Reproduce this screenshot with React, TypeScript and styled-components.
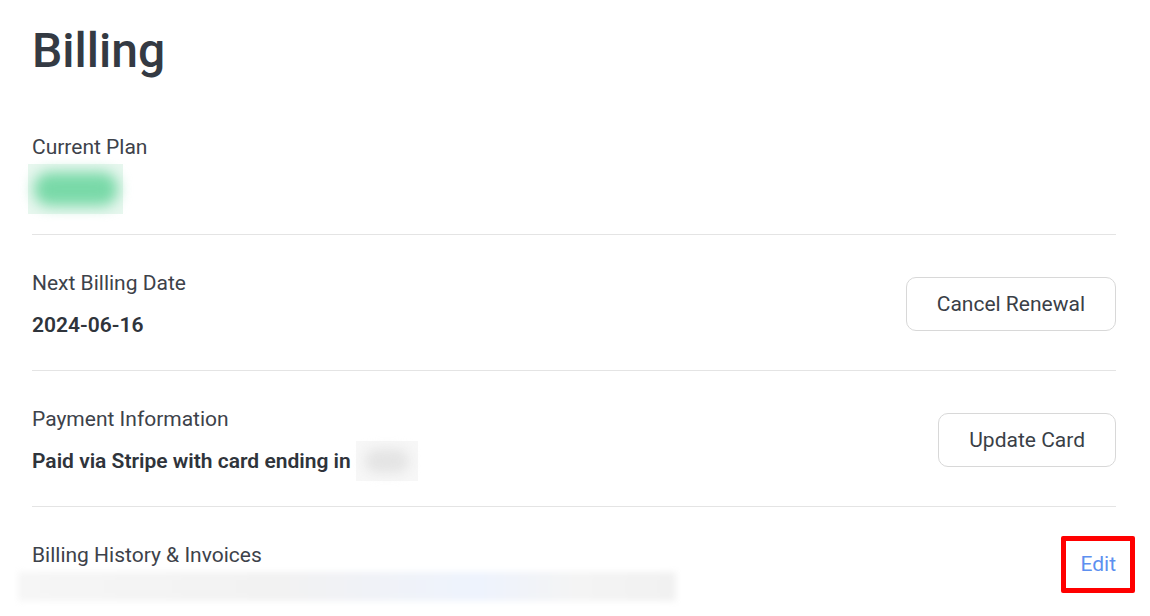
import React from "react";
import styled, { createGlobalStyle } from "styled-components";

const Global = createGlobalStyle`
  html, body { margin: 0; padding: 0; background: #ffffff; }
  body { font-family: Roboto, "Noto Sans", Arial, sans-serif; color: #3a3f47; }
  * { box-sizing: border-box; }
`;

const Page = styled.div`
  padding: 18px 34px 0 32px;
  width: 1150px;
  height: 616px;
  overflow: hidden;
`;

const Title = styled.h1`
  margin: 0 0 15px 0;
  font-size: 48px;
  line-height: 66px;
  font-weight: 500;
  color: #343a43;
`;

const Section = styled.div<{ $last?: boolean }>`
  display: flex;
  align-items: center;
  justify-content: space-between;
  padding: ${(p) => (p.$last ? "32px 0 0 0" : "32px 0 29px 0")};
  border-bottom: ${(p) => (p.$last ? "none" : "1px solid #e4e4e4")};
`;

const Info = styled.div`
  display: flex;
  flex-direction: column;
  gap: 10px;
`;

const Label = styled.div`
  font-size: 21px;
  line-height: 32px;
  color: #3d424a;
`;

const Value = styled.div`
  font-size: 21px;
  line-height: 32px;
  font-weight: 600;
  color: #2f343b;
  display: flex;
  align-items: center;
`;

const CardBlur = styled.div`
  width: 62px;
  height: 40px;
  margin: -4px 0 -4px 5px;
  background: #f7f7f7;
  display: flex;
  align-items: center;
  justify-content: center;
`;

const CardBlob = styled.div`
  width: 44px;
  height: 24px;
  border-radius: 12px;
  background: #e4e4e4;
  filter: blur(6px);
`;

const PlanBlur = styled.div`
  margin: -9px 0 -9px -4px;
  width: 95px;
  height: 50px;
  display: flex;
  align-items: center;
  justify-content: center;
  background: #e8f7ef;
`;

const PlanBlob = styled.div`
  width: 84px;
  height: 34px;
  border-radius: 16px;
  background: #79d9a8;
  filter: blur(7px);
`;

const HistoryBlur = styled.div`
  margin: -9px 0 0 -14px;
  width: 658px;
  height: 29px;
  background: linear-gradient(90deg, #f6f6f6 0%, #f2f2f2 40%, #eef3fd 70%, #f4f4f4 85%, #f1f1f1 100%);
  filter: blur(3px);
`;

const Button = styled.button`
  height: 54px;
  padding: 0 30px;
  border: 1px solid #d8d8d8;
  border-radius: 10px;
  background: #ffffff;
  font-family: Roboto, "Noto Sans", Arial, sans-serif;
  font-size: 21px;
  color: #3a3f47;
  cursor: pointer;
`;

const EditBox = styled.div`
  border: 5px solid #ff0000;
  border-radius: 2px;
  padding: 9px 14px;
  margin-right: -19px;
  align-self: flex-start;
  margin-top: -3px;
`;

const EditLink = styled.a`
  display: block;
  font-size: 21px;
  line-height: 29px;
  color: #5d90f0;
  text-decoration: none;
`;

export default function App() {
  return (
    <>
      <Global />
      <Page>
        <Title>Billing</Title>
        <Section>
          <Info>
            <Label>Current Plan</Label>
            <PlanBlur>
              <PlanBlob />
            </PlanBlur>
          </Info>
        </Section>
        <Section>
          <Info>
            <Label>Next Billing Date</Label>
            <Value>2024-06-16</Value>
          </Info>
          <Button>Cancel Renewal</Button>
        </Section>
        <Section>
          <Info>
            <Label>Payment Information</Label>
            <Value>
              Paid via Stripe with card ending in
              <CardBlur>
                <CardBlob />
              </CardBlur>
            </Value>
          </Info>
          <Button>Update Card</Button>
        </Section>
        <Section $last>
          <Info>
            <Label>Billing History &amp; Invoices</Label>
            <HistoryBlur />
          </Info>
          <EditBox>
            <EditLink href="#">Edit</EditLink>
          </EditBox>
        </Section>
      </Page>
    </>
  );
}
